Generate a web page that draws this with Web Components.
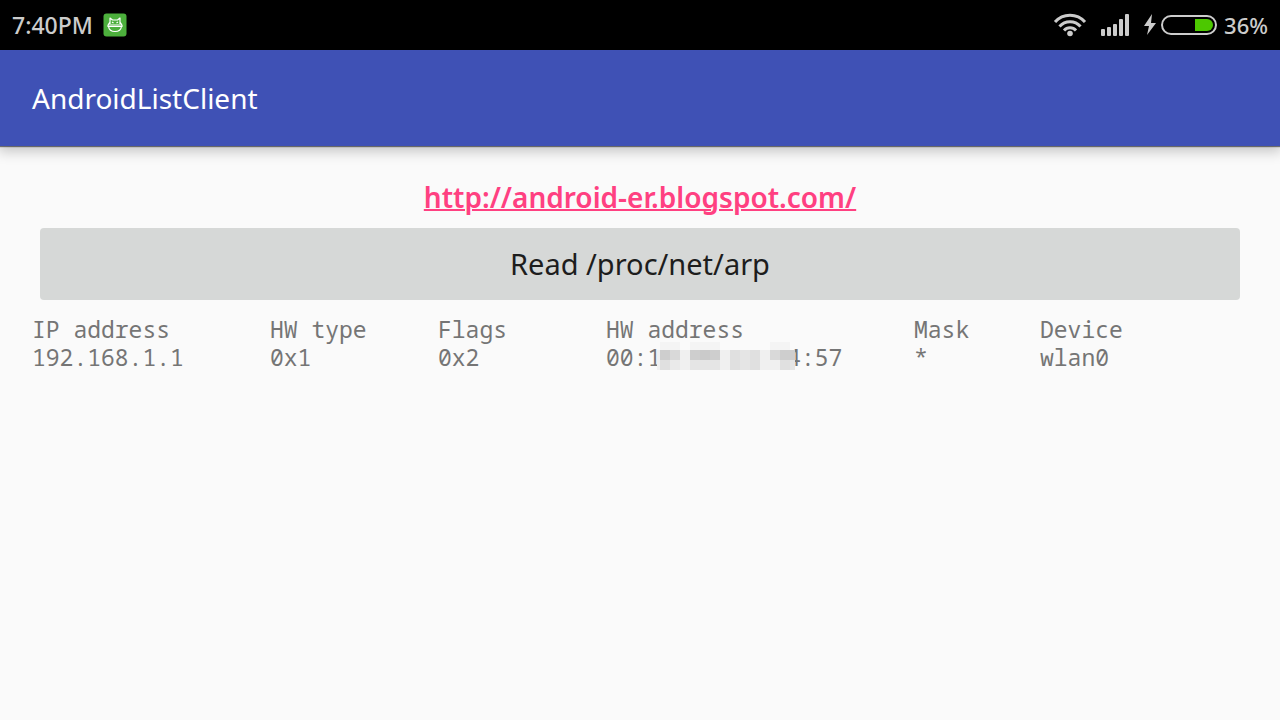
<!DOCTYPE html>
<html lang="en">
<head>
<meta charset="utf-8">
<title>AndroidListClient</title>
<style>
html, body { margin: 0; min-height: 100%; background: #fafafa; }
body { font-family: "Noto Sans", "Open Sans", sans-serif; }
</style>
</head>
<body>
<list-client-app></list-client-app>
<script>
const define = (name, html) => {
  const template = document.createElement('template');
  template.innerHTML = html;
  customElements.define(name, class extends HTMLElement {
    constructor() {
      super();
      this.attachShadow({ mode: 'open' }).append(template.content.cloneNode(true));
    }
  });
};

define('wifi-icon', `
<style>:host { display: block; } svg { display: block; }</style>
<svg width="34" height="24" viewBox="0 0 34 24" fill="none" stroke="#ccc" stroke-width="3" aria-hidden="true">
  <path d="M2 9A20 20 0 0 1 32 9M6.500 13.500A14 14 0 0 1 27.500 13.500M11 17.500A8 8 0 0 1 23 17.500"/>
  <circle cx="17" cy="20.500" r="2.800" fill="#ccc" stroke="none"/>
</svg>`);

define('signal-icon', `
<style>:host { display: block; } svg { display: block; }</style>
<svg width="28" height="22" viewBox="0 0 28 22" fill="#ccc" aria-hidden="true">
  <rect x="0" y="15" width="4" height="7" rx="1"/><rect x="6" y="13" width="4" height="9" rx="1"/>
  <rect x="12" y="10" width="4" height="12" rx="1"/><rect x="18" y="5" width="4" height="17" rx="1"/>
  <rect x="24" y="0" width="4" height="22" rx="1"/>
</svg>`);

define('battery-icon', `
<style>:host { display: block; } svg { display: block; }</style>
<svg width="74" height="22" viewBox="0 0 74 22" aria-hidden="true">
  <path d="M8 0L0 12H5L3 21L12 9H7Z" fill="#ccc"/>
  <rect x="18" y="2" width="54" height="18" rx="9" fill="none" stroke="#ccc" stroke-width="2"/>
  <path d="M51 5H63A6 6 0 0 1 63 17H51Z" fill="#4cc800"/>
</svg>`);

define('mascot-icon', `
<style>:host { display: block; } svg { display: block; }</style>
<svg width="24" height="24" viewBox="0 0 24 24" aria-hidden="true">
  <rect x="0.500" y="0.500" width="23" height="23" rx="3" fill="#4caf3c"/>
  <g fill="none" stroke="#fff" stroke-width="1.200" stroke-linejoin="round">
    <path d="M7 11V5L9.500 7H14.500L17 5V11M5 12H19V13.500H5ZM5.500 13.500C6 17 8.500 18.500 12 18.500S18 17 18.500 13.500M7 9L5 12M17 9L19 12"/>
    <path d="M9 9L10.500 10M15 9L13.500 10"/>
  </g>
</svg>`);

define('status-bar', `
<style>
:host { display: flex; align-items: center; height: 50px; padding: 0 12px; background: #000; color: #ccc; }
.time { font-size: 23px; line-height: 32px; margin-right: 10px; font-weight: 500; }
.right { display: flex; align-items: center; margin-left: auto; }
signal-icon { margin: 0 15px 0 14px; }
.level { font-size: 22px; line-height: 32px; margin-left: 6px; font-weight: 500; }
</style>
<span class="time">7:40PM</span><mascot-icon></mascot-icon>
<div class="right"><wifi-icon></wifi-icon><signal-icon></signal-icon><battery-icon></battery-icon><span class="level">36%</span></div>`);

define('app-bar', `
<style>
:host { display: flex; align-items: center; height: 96px; padding: 0 32px; background: #3f51b5; color: #fff;
  box-shadow: 0 1px 1px rgba(0,0,0,.5), 0 4px 12px 2px rgba(0,0,0,.2); }
h1 { margin: 0; font-size: 28px; line-height: 40px; font-weight: 400; }
</style>
<h1><slot></slot></h1>`);

define('redacted-block', `
<style>
:host { display: inline-block; position: relative; width: 126px; height: 20px; vertical-align: baseline; }
svg { position: absolute; left: -4px; top: -4px; }
</style>
<svg width="138" height="28" viewBox="0 0 138 28" shape-rendering="crispEdges" aria-hidden="true">
  <path d="M0 8H138V28H0Z" fill="#f0f0f0"/>
  <path d="M3 0H23V8H3ZM33 0H63V8H33ZM113 0H133V8H113Z" fill="#f4f4f4"/>
  <path d="M3 8H13V18H3ZM33 8H43V18H33ZM53 8H63V18H53ZM123 8H138V18H123Z" fill="#cecece"/>
  <path d="M43 8H53V18H43Z" fill="#cacaca"/>
  <path d="M13 8H23V18H13ZM113 8H123V18H113Z" fill="#d9d9d9"/>
  <path d="M3 18H13V28H3ZM73 8H83V28H73ZM93 8H103V28H93ZM123 18H133V28H123Z" fill="#e0e0e0"/>
  <path d="M33 18H63V28H33ZM83 8H93V28H83ZM133 18H138V28H133Z" fill="#e5e5e5"/>
  <path d="M13 18H23V28H13Z" fill="#eaeaea"/>
</svg>`);

define('arp-table', `
<style>
:host { display: block; }
table { table-layout: fixed; width: 100%; min-width: 1160px; border-collapse: collapse;
  font: 23px/28px "Droid Sans Mono", "Noto Sans Mono", "DejaVu Sans Mono", monospace; color: #757575; }
th, td { padding: 0; text-align: left; font-weight: 400; white-space: nowrap; }
.ip { width: 238px; } .short { width: 168px; } .mac { width: 308px; } .mask { width: 126px; }
</style>
<table>
  <thead><tr><th class="ip">IP address</th><th class="short">HW type</th><th class="short">Flags</th><th class="mac">HW address</th><th class="mask">Mask</th><th>Device</th></tr></thead>
  <tbody><tr><td>192.168.1.1</td><td>0x1</td><td>0x2</td><td>00:1<redacted-block></redacted-block>4:57</td><td>*</td><td>wlan0</td></tr></tbody>
</table>`);

define('list-client-app', `
<style>
:host { display: block; }
main { padding: 31px 32px 0; }
.link { text-align: center; font-size: 28px; line-height: 40px; font-weight: 600; }
a { color: #ff4081; text-decoration-thickness: 2px; }
.action { padding: 11px 8px 15px; }
button { display: block; width: 100%; height: 72px; border: 0; border-radius: 4px; background: #d6d8d7;
  color: #1d1d1d; font: inherit; font-size: 29px; line-height: 40px; }
</style>
<status-bar></status-bar>
<app-bar>AndroidListClient</app-bar>
<main>
  <div class="link"><a href="http://android-er.blogspot.com/">http://android-er.blogspot.com/</a></div>
  <div class="action"><button type="button">Read /proc/net/arp</button></div>
  <arp-table></arp-table>
</main>`);
</script>
</body>
</html>
